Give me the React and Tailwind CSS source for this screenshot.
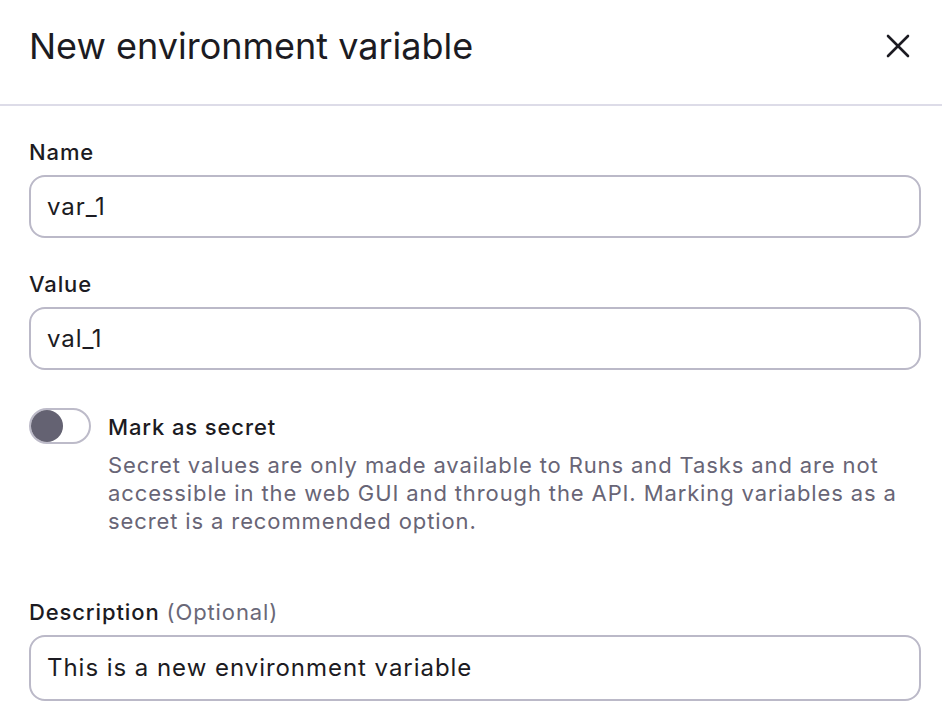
import React, { useState } from 'react';

// ── Small pieces ──────────────────────────────────────────────────────────────
function CloseIcon() {
  return (
    <svg width="24" height="24" viewBox="0 0 24 24" fill="none" stroke="#1c1b22" strokeWidth="2.6" strokeLinecap="round">
      <path d="M2 2L22 22" />
      <path d="M22 2L2 22" />
    </svg>
  );
}

function Field({ label, optional, value, tall, className }) {
  return (
    <div className={className}>
      <label className="block text-[22px] leading-[30px] font-medium tracking-[0.04em] text-[#1c1b22]">
        {label}
        {optional && <span className="font-normal text-[#6a6878]"> (Optional)</span>}
      </label>
      <div
        className={
          'mt-2 flex items-center rounded-[16px] border-2 border-[#bbb9c8] bg-white px-4 ' +
          (tall ? 'h-[66px]' : 'h-[63px]')
        }
      >
        <input
          readOnly
          value={value}
          className="w-full bg-transparent text-[24px] tracking-[0.04em] text-[#1c1b22] outline-none"
        />
      </div>
    </div>
  );
}

export default function App() {
  const [secret, setSecret] = useState(false);

  return (
    <div className="min-h-screen bg-white" style={{ fontFamily: 'Inter, "Noto Sans", sans-serif' }}>
      {/* Header */}
      <header className="flex items-start justify-between border-b-2 border-[#dddce8] pl-[29px] pr-[32px] pt-[24px] pb-[36px]">
        <h1 className="text-[36px] leading-[44px] font-normal text-[#1c1b22]">New environment variable</h1>
        <button className="mt-[10px]">
          <CloseIcon />
        </button>
      </header>

      {/* Body */}
      <div className="pl-[29px] pr-[21px] pt-[31px]">
        <Field label="Name" value="var_1" />
        <Field label="Value" value="val_1" className="mt-[31px]" />

        {/* Secret toggle */}
        <div className="mt-[38px] flex items-start gap-[17px]">
          <button
            onClick={() => setSecret(!secret)}
            className="flex h-[36px] w-[62px] shrink-0 items-center rounded-full border-2 border-[#bdbbc9] bg-white"
          >
            <span className="h-[32px] w-[32px] rounded-full bg-[#646272]" />
          </button>
          <div className="pt-[4px]">
            <p className="text-[22px] leading-[30px] font-medium tracking-[0.04em] text-[#1c1b22]">Mark as secret</p>
            <p className="mt-[9px] text-[22px] leading-[28px] tracking-[0.04em] text-[#686576]">
              Secret values are only made available to Runs and Tasks and are not accessible in the web GUI and
              through the API. Marking variables as a secret is a recommended option.
            </p>
          </div>
        </div>

        <Field label="Description" optional value="This is a new environment variable" tall className="mt-[62px]" />
      </div>
    </div>
  );
}
